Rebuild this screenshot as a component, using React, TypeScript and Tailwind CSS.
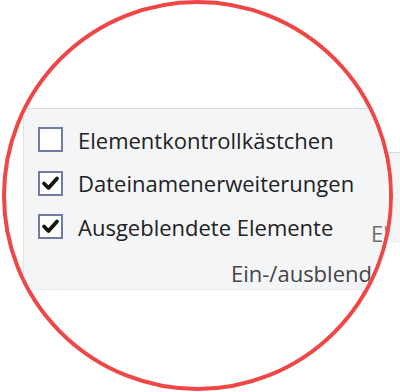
import React from "react";

const rows = [
  { label: "Elementkontrollkästchen", checked: false },
  { label: "Dateinamenerweiterungen", checked: true },
  { label: "Ausgeblendete Elemente", checked: true },
];

function Box({ checked }: { checked: boolean }) {
  return (
    <div className="w-[25px] h-[25px] shrink-0 border-2 border-[#6f7ca6] bg-white flex items-center justify-center">
      {checked && (
        <svg width="21" height="21" viewBox="0 0 21 21">
          <path d="M4 10.5 L8.5 15 L17 5.5" fill="none" stroke="#141414" strokeWidth="3.8" strokeLinecap="round" strokeLinejoin="round" />
        </svg>
      )}
    </div>
  );
}

export default function App() {
  return (
    <div className="relative w-[400px] h-[392px] bg-white overflow-hidden font-['Open_Sans',sans-serif]">
      {/* Rest des Bildschirms ausserhalb der Lupe */}
      <div className="absolute left-[386px] top-[152px] w-[14px] h-[91px] bg-[#f3f4f6] border-t border-[#d8d9dc]" />

      {/* Lupe */}
      <div className="absolute left-[2px] top-0 w-[391px] h-[391px] rounded-full border-4 border-[#ef4646] overflow-hidden">
        <div className="mt-[104px] ml-[17px] w-[520px] h-[182px] bg-[#f4f5f7] border-l border-t border-b border-l-[#e1e2e5] border-t-[#d9dadd] border-b-[#ebecee] flex">
          <div className="w-[347px] shrink-0 pt-[18px] pl-[14px] flex flex-col">
            <div className="flex flex-col gap-[18.5px]">
              {rows.map((r) => (
                <div key={r.label} className="h-[25px] flex items-center gap-[15px]">
                  <Box checked={r.checked} />
                  <span className="text-[22px] font-medium leading-none text-[#222] whitespace-nowrap">{r.label}</span>
                </div>
              ))}
            </div>
            <div className="mt-[19px] pl-[193px] text-[22px] font-medium leading-[30px] text-[#454545] whitespace-nowrap">
              Ein-/ausblend
            </div>
          </div>
          <div className="w-[30px] pt-[109px] text-[22px] font-medium leading-[30px] text-[#6d6d6d] whitespace-nowrap">
            El
          </div>
        </div>
      </div>
    </div>
  );
}
